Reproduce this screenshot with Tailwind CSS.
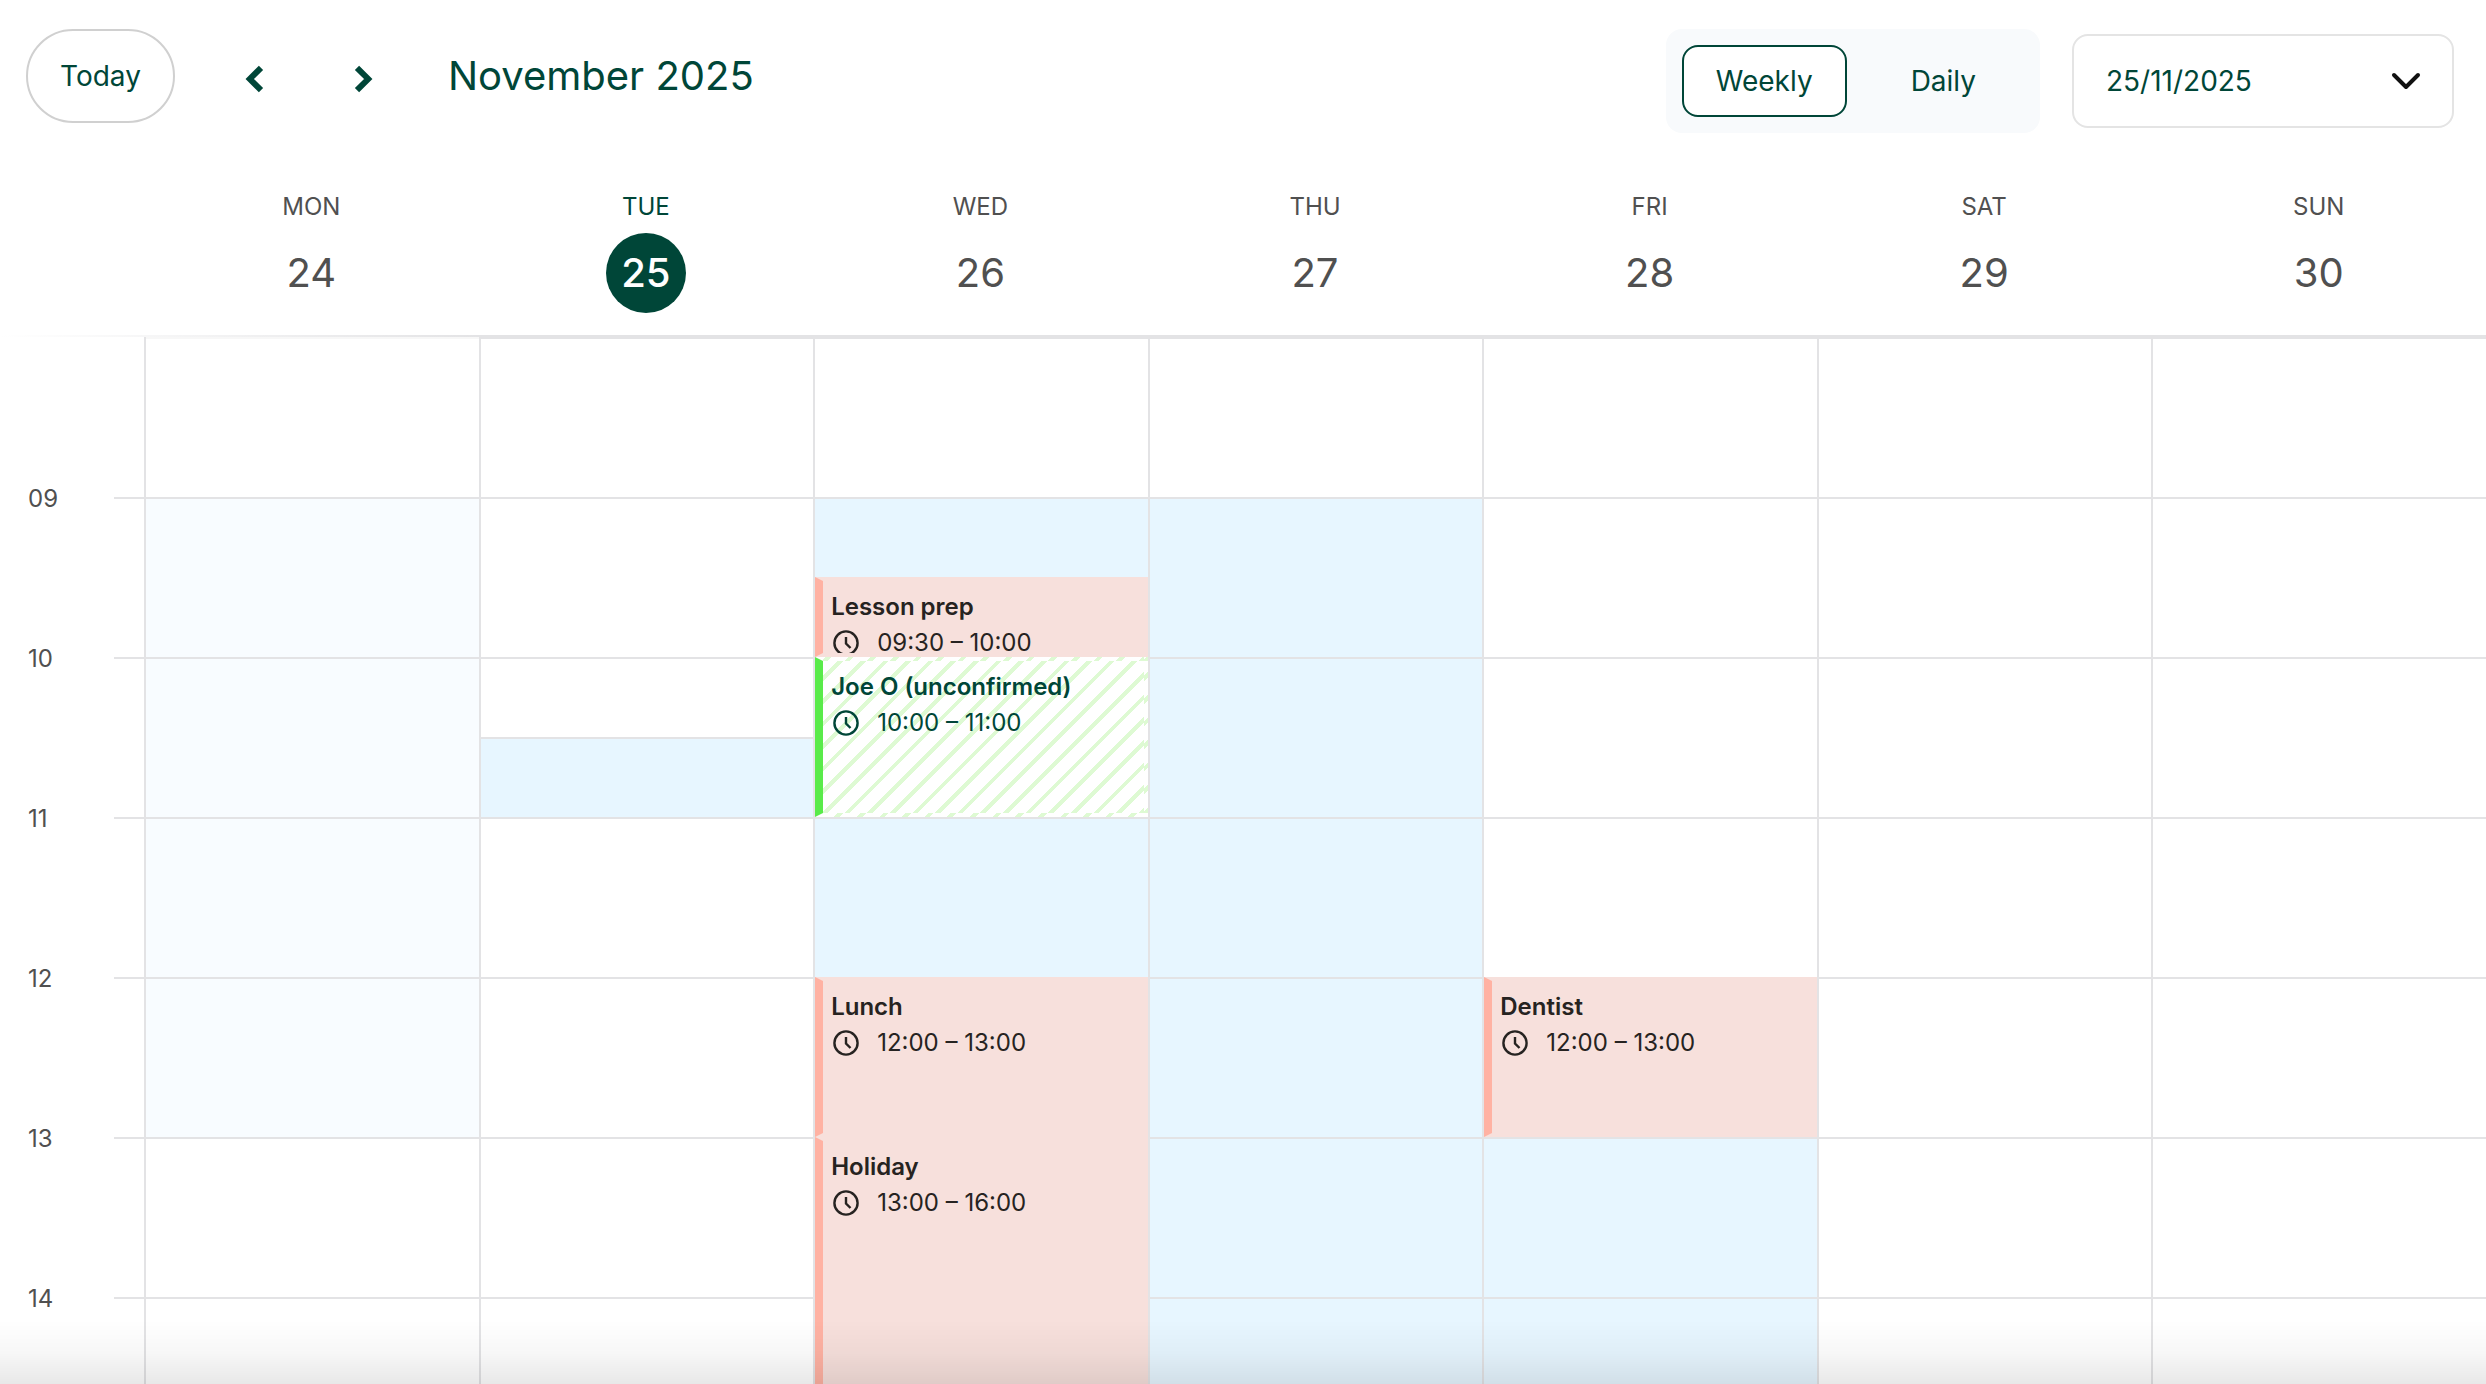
<!DOCTYPE html>
<html lang="en">
  <head>
    <meta charset="UTF-8" />
    <meta name="viewport" content="width=device-width, initial-scale=1.0" />
    <title>Calendar</title>
    <script src="https://cdn.jsdelivr.net/npm/@tailwindcss/browser@4"></script>
  </head>
  <body class="h-screen flex flex-col overflow-hidden bg-white text-[#004638] font-['Inter',sans-serif]">
    <!-- Toolbar -->
    <header class="flex items-start justify-between pt-[29px] pl-[26px] pr-8">
      <div class="flex items-center">
        <button class="h-[94px] px-8 rounded-full border-2 border-[#d0d0d0] text-[28px] leading-9">Today</button>
        <button aria-label="Previous week" class="mt-1 ml-[63px] w-8 h-8 flex items-center justify-center">
          <svg class="w-8 h-8" viewBox="0 0 32 32" fill="none" stroke="currentColor" stroke-width="6">
            <path d="M23 5.8 11.8 17 23 28.2" />
          </svg>
        </button>
        <button aria-label="Next week" class="mt-1 ml-[78px] w-8 h-8 flex items-center justify-center">
          <svg class="w-8 h-8" viewBox="0 0 32 32" fill="none" stroke="currentColor" stroke-width="6">
            <path d="M9 5.8 20.2 17 9 28.2" />
          </svg>
        </button>
        <h1 class="ml-17 text-[40px] leading-12">November 2025</h1>
      </div>

      <div class="flex items-center gap-8">
        <div class="flex p-4 rounded-2xl bg-[#f8fafc] text-[28px] leading-9">
          <button class="h-[72px] px-8 rounded-2xl border-2 border-[#004638] bg-white">Weekly</button>
          <button class="h-[72px] pl-16 pr-12">Daily</button>
        </div>
        <div class="relative">
          <select aria-label="Date" class="block appearance-none w-[382px] h-[94px] px-8 rounded-2xl border-2 border-[#e4e4e4] bg-white text-[28px]">
            <option>25/11/2025</option>
          </select>
          <svg class="absolute right-8 inset-y-0 my-auto w-8 h-8 pointer-events-none" viewBox="0 0 32 32" fill="none" stroke="#111" stroke-width="4" stroke-linecap="round" stroke-linejoin="round">
            <path d="M4 10l12 12 12-12" />
          </svg>
        </div>
      </div>
    </header>

    <!-- Day names -->
    <div class="grid grid-cols-[144px_repeat(7,1fr)] pt-[58px] pb-[22px] text-center text-[#505050]">
      <div></div>
      <div class="flex flex-col items-center gap-2.5">
        <span class="text-2xl leading-8">MON</span>
        <span class="size-20 leading-20 text-[40px]">24</span>
      </div>
      <div class="flex flex-col items-center gap-2.5">
        <span class="text-2xl leading-8 text-[#004638]">TUE</span>
        <span class="size-20 leading-20 text-[40px] font-medium rounded-full bg-[#004638] text-white">25</span>
      </div>
      <div class="flex flex-col items-center gap-2.5">
        <span class="text-2xl leading-8">WED</span>
        <span class="size-20 leading-20 text-[40px]">26</span>
      </div>
      <div class="flex flex-col items-center gap-2.5">
        <span class="text-2xl leading-8">THU</span>
        <span class="size-20 leading-20 text-[40px]">27</span>
      </div>
      <div class="flex flex-col items-center gap-2.5">
        <span class="text-2xl leading-8">FRI</span>
        <span class="size-20 leading-20 text-[40px]">28</span>
      </div>
      <div class="flex flex-col items-center gap-2.5">
        <span class="text-2xl leading-8">SAT</span>
        <span class="size-20 leading-20 text-[40px]">29</span>
      </div>
      <div class="flex flex-col items-center gap-2.5">
        <span class="text-2xl leading-8">SUN</span>
        <span class="size-20 leading-20 text-[40px]">30</span>
      </div>
    </div>

    <div class="shrink-0 h-0.5 bg-linear-to-r from-white to-[#e3e3e5] to-[480px]"></div>

    <!-- Week grid, one hour is h-40 -->
    <main class="grow min-h-0 overflow-hidden grid grid-cols-[144px_repeat(7,1fr)] text-2xl leading-9 [&_.hour]:h-40 [&_.half]:h-20 [&_.hour]:border-t-2 [&_.half]:border-t-2 [&_.hour]:border-[#e3e3e5] [&_.half]:border-[#e3e3e5]">
      <div class="pt-36 pl-7 text-[#505050]">
        <div class="h-40 flex items-start justify-between"><span>09</span><i class="mt-4 w-[30px] h-0.5 bg-[#e3e3e5]"></i></div>
        <div class="h-40 flex items-start justify-between"><span>10</span><i class="mt-4 w-[30px] h-0.5 bg-[#e3e3e5]"></i></div>
        <div class="h-40 flex items-start justify-between"><span>11</span><i class="mt-4 w-[30px] h-0.5 bg-[#e3e3e5]"></i></div>
        <div class="h-40 flex items-start justify-between"><span>12</span><i class="mt-4 w-[30px] h-0.5 bg-[#e3e3e5]"></i></div>
        <div class="h-40 flex items-start justify-between"><span>13</span><i class="mt-4 w-[30px] h-0.5 bg-[#e3e3e5]"></i></div>
        <div class="h-40 flex items-start justify-between"><span>14</span><i class="mt-4 w-[30px] h-0.5 bg-[#e3e3e5]"></i></div>
      </div>

      <div class="border-l-2 border-[#e3e3e5]">
        <div class="h-40 border-t-2 border-[#f7f7f7]"></div>
        <div class="hour bg-[#f8fcff]"></div>
        <div class="hour bg-[#f8fcff]"></div>
        <div class="hour bg-[#f8fcff]"></div>
        <div class="hour bg-[#f8fcff]"></div>
        <div class="hour"></div>
        <div class="hour"></div>
      </div>

      <div class="border-l-2 border-[#e3e3e5]">
        <div class="hour"></div>
        <div class="hour"></div>
        <div class="half"></div>
        <div class="half bg-[#e7f6ff]"></div>
        <div class="hour"></div>
        <div class="hour"></div>
        <div class="hour"></div>
        <div class="hour"></div>
      </div>

      <div class="border-l-2 border-[#e3e3e5]">
        <div class="hour"></div>
        <div class="half bg-[#e7f6ff]"></div>
        <article class="h-20 overflow-hidden border-4 border-l-8 border-[#f7e0dc] border-l-[#ffb2a3] bg-[#f7e0dc] text-[#262321] pt-2 pl-2">
          <h2 class="font-semibold">Lesson prep</h2>
          <p class="flex items-center gap-4">
            <svg class="w-[30px] h-[30px]" viewBox="0 0 30 30" fill="none" stroke="currentColor" stroke-width="2.4"><circle cx="15" cy="15" r="11.6" /><path d="M15 9v6.5l4.5 4.5" /></svg>
            09:30 – 10:00
          </p>
        </article>
        <article class="h-40 overflow-hidden border-4 border-l-8 border-transparent border-l-[#59eb4a] bg-[repeating-linear-gradient(-45deg,#defad3_0px,#defad3_4px,#fff_4px,#fff_16px)] pt-2 pl-2">
          <h2 class="font-semibold">Joe O (unconfirmed)</h2>
          <p class="flex items-center gap-4">
            <svg class="w-[30px] h-[30px]" viewBox="0 0 30 30" fill="none" stroke="currentColor" stroke-width="2.4"><circle cx="15" cy="15" r="11.6" /><path d="M15 9v6.5l4.5 4.5" /></svg>
            10:00 – 11:00
          </p>
        </article>
        <div class="hour bg-[#e7f6ff]"></div>
        <article class="h-40 overflow-hidden border-4 border-l-8 border-[#f7e0dc] border-l-[#ffb2a3] bg-[#f7e0dc] text-[#262321] pt-2 pl-2">
          <h2 class="font-semibold">Lunch</h2>
          <p class="flex items-center gap-4">
            <svg class="w-[30px] h-[30px]" viewBox="0 0 30 30" fill="none" stroke="currentColor" stroke-width="2.4"><circle cx="15" cy="15" r="11.6" /><path d="M15 9v6.5l4.5 4.5" /></svg>
            12:00 – 13:00
          </p>
        </article>
        <article class="h-120 overflow-hidden border-4 border-l-8 border-[#f7e0dc] border-l-[#ffb2a3] bg-[#f7e0dc] text-[#262321] pt-2 pl-2">
          <h2 class="font-semibold">Holiday</h2>
          <p class="flex items-center gap-4">
            <svg class="w-[30px] h-[30px]" viewBox="0 0 30 30" fill="none" stroke="currentColor" stroke-width="2.4"><circle cx="15" cy="15" r="11.6" /><path d="M15 9v6.5l4.5 4.5" /></svg>
            13:00 – 16:00
          </p>
        </article>
      </div>

      <div class="border-l-2 border-[#e3e3e5]">
        <div class="hour"></div>
        <div class="hour bg-[#e7f6ff]"></div>
        <div class="hour bg-[#e7f6ff]"></div>
        <div class="hour bg-[#e7f6ff]"></div>
        <div class="hour bg-[#e7f6ff]"></div>
        <div class="hour bg-[#e7f6ff]"></div>
        <div class="hour bg-[#e7f6ff]"></div>
      </div>

      <div class="border-l-2 border-[#e3e3e5]">
        <div class="hour"></div>
        <div class="hour"></div>
        <div class="hour"></div>
        <div class="hour"></div>
        <article class="h-40 overflow-hidden border-4 border-l-8 border-[#f7e0dc] border-l-[#ffb2a3] bg-[#f7e0dc] text-[#262321] pt-2 pl-2">
          <h2 class="font-semibold">Dentist</h2>
          <p class="flex items-center gap-4">
            <svg class="w-[30px] h-[30px]" viewBox="0 0 30 30" fill="none" stroke="currentColor" stroke-width="2.4"><circle cx="15" cy="15" r="11.6" /><path d="M15 9v6.5l4.5 4.5" /></svg>
            12:00 – 13:00
          </p>
        </article>
        <div class="hour bg-[#e7f6ff]"></div>
        <div class="hour bg-[#e7f6ff]"></div>
      </div>

      <div class="border-l-2 border-[#e3e3e5]">
        <div class="hour"></div>
        <div class="hour"></div>
        <div class="hour"></div>
        <div class="hour"></div>
        <div class="hour"></div>
        <div class="hour"></div>
        <div class="hour"></div>
      </div>

      <div class="border-l-2 border-[#e3e3e5]">
        <div class="hour"></div>
        <div class="hour"></div>
        <div class="hour"></div>
        <div class="hour"></div>
        <div class="hour"></div>
        <div class="hour"></div>
        <div class="hour"></div>
      </div>
    </main>

    <!-- Scroll shadow -->
    <div class="fixed inset-x-0 bottom-0 h-16 pointer-events-none bg-linear-to-t from-black/9 via-black/3 to-transparent"></div>
  </body>
</html>
